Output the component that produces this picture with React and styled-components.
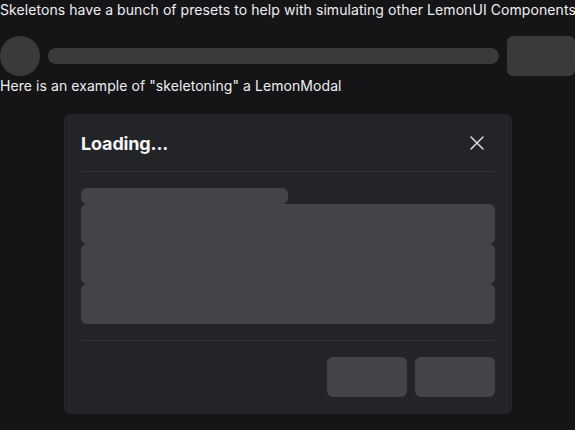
import React from "react";
import styled, { createGlobalStyle } from "styled-components";

const Global = createGlobalStyle`
  html, body { margin: 0; padding: 0; background: #151517; }
  body {
    font-family: Inter, "Noto Sans", sans-serif;
    font-size: 14px;
    line-height: 20px;
    color: #eeeef0;
  }
  * { box-sizing: border-box; }
`;

const Page = styled.div`
  display: flex;
  flex-direction: column;
  width: 575px;
  overflow: hidden;
`;

const Text = styled.p`
  margin: 0;
  white-space: nowrap;
  letter-spacing: 0.07px;
`;

const Row = styled.div`
  display: flex;
  align-items: center;
  gap: 8px;
  margin-top: 16px;
`;

const Skel = styled.div`
  background: ${(p) => p.$bg || "#3a3a3d"};
  border-radius: ${(p) => p.$radius || "6px"};
  height: ${(p) => p.$h || "16px"};
  width: ${(p) => p.$w || "auto"};
  flex: ${(p) => p.$flex || "none"};
`;

const ModalWrap = styled.div`
  display: flex;
  padding: 18px 0 0 64px;
`;

const Modal = styled.div`
  width: 448px;
  background: #232428;
  border: 1px solid #26272b;
  border-radius: 6px;
  display: flex;
  flex-direction: column;
  padding: 0 16px;
`;

const Header = styled.div`
  height: 57px;
  display: flex;
  align-items: center;
  justify-content: space-between;
  border-bottom: 1px solid #313237;
`;

const Title = styled.h3`
  margin: 0;
  font-size: 18px;
  font-weight: 700;
  letter-spacing: -0.15px;
  color: #f5f5f7;
  padding-top: 1px;
`;

const Close = styled.button`
  background: none;
  border: none;
  padding: 0;
  width: 14px;
  height: 14px;
  margin-right: 11px;
  display: flex;
  color: #d6d6d8;
`;

const Content = styled.div`
  display: flex;
  flex-direction: column;
  padding: 16px 0;
  border-bottom: 1px solid #313237;
`;

const Footer = styled.div`
  display: flex;
  justify-content: flex-end;
  gap: 8px;
  padding: 16px 0;
`;

export default function App() {
  return (
    <>
      <Global />
      <Page>
        <Text>Skeletons have a bunch of presets to help with simulating other LemonUI Components</Text>
        <Row>
          <Skel $w="40px" $h="40px" $radius="50%" />
          <Skel $flex="1" $h="16px" $radius="8px" />
          <Skel $w="68px" $h="40px" $radius="6px" />
        </Row>
        <Text>Here is an example of "skeletoning" a LemonModal</Text>
        <ModalWrap>
          <Modal>
            <Header>
              <Title>Loading...</Title>
              <Close aria-label="close">
                <svg width="14" height="14" viewBox="0 0 14 14" fill="none">
                  <path d="M1 1L13 13M13 1L1 13" stroke="currentColor" strokeWidth="1.6" strokeLinecap="round" />
                </svg>
              </Close>
            </Header>
            <Content>
              <Skel $bg="#434448" $w="50%" $h="16px" $radius="6px" />
              <Skel $bg="#434448" $h="40px" $radius="6px" />
              <Skel $bg="#434448" $h="40px" $radius="6px" />
              <Skel $bg="#434448" $h="40px" $radius="6px" />
            </Content>
            <Footer>
              <Skel $bg="#434448" $w="80px" $h="40px" $radius="6px" />
              <Skel $bg="#434448" $w="80px" $h="40px" $radius="6px" />
            </Footer>
          </Modal>
        </ModalWrap>
      </Page>
    </>
  );
}
